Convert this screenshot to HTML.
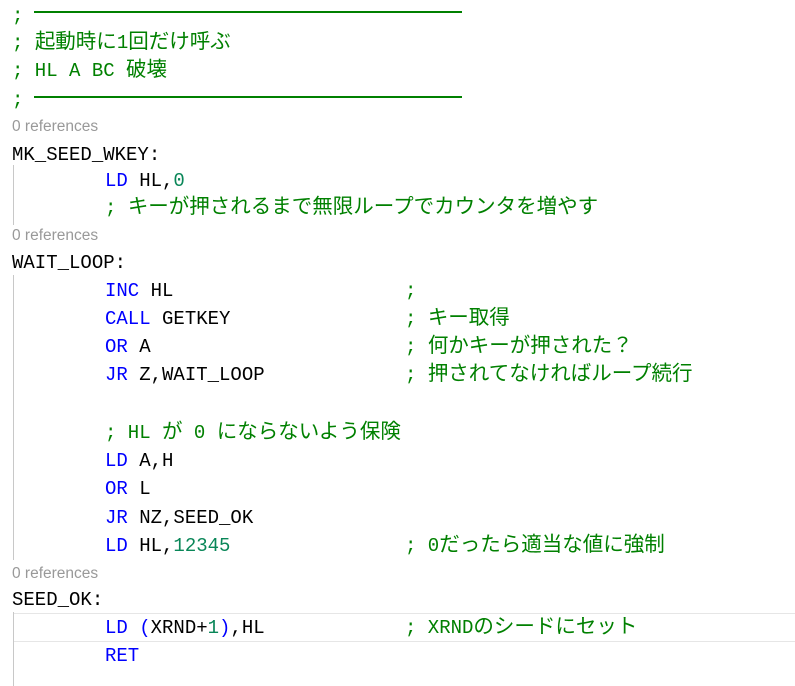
<!DOCTYPE html>
<html><head><meta charset="utf-8"><style>
body{margin:0;width:795px;height:686px;background:#fff;position:relative;overflow:hidden;font-family:"Liberation Mono","Noto Sans CJK JP",monospace;font-size:19px;color:#000}
.l{position:absolute;height:28px;line-height:28px;white-space:pre}
.j{font-family:"Noto Sans CJK JP",sans-serif;font-size:20.5px;line-height:0}
.g{color:#008000}.b{color:#0000ff}.n{color:#098658}
.r{position:absolute;left:12px;font-family:"Liberation Sans",sans-serif;font-size:15.5px;color:#999;height:20px;line-height:20px}
.dash{position:absolute;left:34px;width:428px;height:2px;background:#008000}
.v{position:absolute;left:13px;width:1px;background:#c8c8c8}
</style></head><body>
<div class="v" style="top:165px;height:60px"></div>
<div class="v" style="top:275px;height:285px"></div>
<div class="v" style="top:612px;height:74px"></div>
<div style="position:absolute;left:14px;top:613px;width:790px;height:27px;border:1px solid #e6e6e6;border-left:none"></div>

<div class="l g" style="left:12px;top:2px">;</div><div class="dash" style="top:11px"></div>
<div class="l g" style="left:12px;top:29px">; <span class="j">起動時に</span>1<span class="j">回だけ呼ぶ</span></div>
<div class="l g" style="left:12px;top:57px">; HL A BC <span class="j">破壊</span></div>
<div class="l g" style="left:12px;top:86px">;</div><div class="dash" style="top:96px"></div>
<div class="r" style="top:117px">0 references</div>
<div class="l" style="left:12px;top:141px">MK_SEED_WKEY:</div>
<div class="l" style="left:105px;top:167px"><span class="b">LD</span> HL,<span class="n">0</span></div>
<div class="l g" style="left:105px;top:194px">; <span class="j">キーが押されるまで無限ループでカウンタを増やす</span></div>
<div class="r" style="top:226px">0 references</div>
<div class="l" style="left:12px;top:249px">WAIT_LOOP:</div>
<div class="l" style="left:105px;top:277px"><span class="b">INC</span> HL</div><div class="l g" style="left:405px;top:277px">;</div>
<div class="l" style="left:105px;top:305px"><span class="b">CALL</span> GETKEY</div><div class="l g" style="left:405px;top:305px">; <span class="j">キー取得</span></div>
<div class="l" style="left:105px;top:333px"><span class="b">OR</span> A</div><div class="l g" style="left:405px;top:333px">; <span class="j">何かキーが押された？</span></div>
<div class="l" style="left:105px;top:361px"><span class="b">JR</span> Z,WAIT_LOOP</div><div class="l g" style="left:405px;top:361px">; <span class="j">押されてなければループ続行</span></div>
<div class="l g" style="left:105px;top:419px">; HL <span class="j">が</span> 0 <span class="j">にならないよう保険</span></div>
<div class="l" style="left:105px;top:447px"><span class="b">LD</span> A,H</div>
<div class="l" style="left:105px;top:475px"><span class="b">OR</span> L</div>
<div class="l" style="left:105px;top:504px"><span class="b">JR</span> NZ,SEED_OK</div>
<div class="l" style="left:105px;top:532px"><span class="b">LD</span> HL,<span class="n">12345</span></div><div class="l g" style="left:405px;top:532px">; 0<span class="j">だったら適当な値に強制</span></div>
<div class="r" style="top:564px">0 references</div>
<div class="l" style="left:12px;top:586px">SEED_OK:</div>
<div class="l" style="left:105px;top:614px"><span class="b">LD</span> <span class="b">(</span>XRND+<span class="n">1</span><span class="b">)</span>,HL</div><div class="l g" style="left:405px;top:614px">; XRND<span class="j">のシードにセット</span></div>
<div class="l b" style="left:105px;top:642px">RET</div>
</body></html>
